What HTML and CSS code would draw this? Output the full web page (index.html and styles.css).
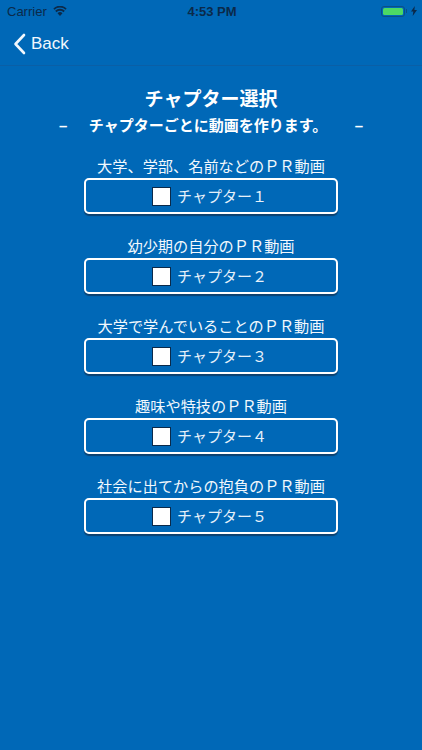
FILE: index.html
```html
<!DOCTYPE html>
<html lang="ja">
<head>
<meta charset="utf-8">
<title>チャプター選択</title>
<link rel="stylesheet" href="styles.css">
</head>
<body>
<div class="status">
  <div class="st-left"><span>Carrier</span>
    <svg class="wifi" width="14" height="10" viewBox="0 0 16 12"><path d="M8 12 5 8.7a4.2 4.2 0 0 1 6 0zM3.8 7.4 2.2 5.6a8.2 8.2 0 0 1 11.6 0l-1.6 1.8a5.9 5.9 0 0 0-8.4 0zM1.3 4.6 0 3a11.3 11.3 0 0 1 16 0l-1.3 1.6a9.4 9.4 0 0 0-13.4 0z" fill="#0b2a4a"/></svg>
  </div>
  <div class="st-time">4:53 PM</div>
  <div class="st-right">
    <span class="batt"><span class="batt-fill"></span></span><span class="batt-tip"></span>
    <svg class="bolt" width="6" height="10" viewBox="0 0 6 10"><path d="M3.8 0 0 5.6h2.3L1.7 10 6 3.9H3.4z" fill="#0b2a4a"/></svg>
  </div>
</div>
<nav class="nav">
  <svg class="chev" width="13" height="22" viewBox="0 0 13 22"><path d="M11 2 2.5 11l8.5 9" fill="none" stroke="#f2f8fd" stroke-width="2.6" stroke-linecap="round" stroke-linejoin="round"/></svg>
  <span class="back">Back</span>
</nav>
<main class="main">
  <h1 class="title">チャプター選択</h1>
  <div class="sub"><span>–</span><span class="sub-text">チャプターごとに動画を作ります。</span><span>–</span></div>
  <section class="group">
    <div class="label">大学、学部、名前などのＰＲ動画</div>
    <div class="btn"><span class="check"></span><span class="btn-text">チャプター１</span></div>
  </section>
  <section class="group">
    <div class="label">幼少期の自分のＰＲ動画</div>
    <div class="btn"><span class="check"></span><span class="btn-text">チャプター２</span></div>
  </section>
  <section class="group">
    <div class="label">大学で学んでいることのＰＲ動画</div>
    <div class="btn"><span class="check"></span><span class="btn-text">チャプター３</span></div>
  </section>
  <section class="group">
    <div class="label">趣味や特技のＰＲ動画</div>
    <div class="btn"><span class="check"></span><span class="btn-text">チャプター４</span></div>
  </section>
  <section class="group">
    <div class="label">社会に出てからの抱負のＰＲ動画</div>
    <div class="btn"><span class="check"></span><span class="btn-text">チャプター５</span></div>
  </section>
</main>
</body>
</html>
```
FILE: styles.css
```css
* { box-sizing: border-box; }
html, body { margin: 0; padding: 0; }
body {
  width: 422px;
  height: 750px;
  overflow: hidden;
  background: #0068b7;
  color: #fff;
  font-family: "Liberation Sans", "Noto Sans CJK JP", sans-serif;
}
.status {
  height: 22px;
  display: flex;
  align-items: center;
  padding: 0 5px 0 7px;
  font-size: 13px;
  color: #0b2a4a;
}
.st-left { flex: 1; display: flex; align-items: center; gap: 6px; }
.st-time { font-weight: 700; font-size: 13px; }
.st-right { flex: 1; display: flex; align-items: center; justify-content: flex-end; }
.batt {
  width: 24px; height: 11px;
  border: 1px solid #0b4f86;
  border-radius: 3px;
  padding: 1px;
  display: flex;
}
.batt-fill { flex: 1; background: #4cd964; border-radius: 1.5px; }
.batt-tip { width: 1px; height: 4px; background: #0b4f86; margin-left: 1px; }
.bolt { margin-left: 4px; }
.nav {
  height: 44px;
  display: flex;
  align-items: center;
  padding-left: 13px;
  gap: 5px;
  border-bottom: 1px solid #0a5fa6;
}
.back { font-size: 17px; color: #f2f8fd; }
.main {
  display: flex;
  flex-direction: column;
  align-items: center;
  padding-top: 22px;
}
.title {
  margin: 0;
  font-size: 19px;
  line-height: 24px;
  font-weight: 700;
}
.sub {
  width: 304px;
  margin-top: 4px;
  display: flex;
  justify-content: space-between;
  font-size: 15px;
  font-weight: 700;
  line-height: 20px;
}
.sub-text { margin-right: 6px; }
.group {
  width: 254px;
  display: flex;
  flex-direction: column;
  align-items: center;
  margin-bottom: 23px;
}
.sub + .group { margin-top: 21px; }
.label {
  font-size: 15.2px;
  line-height: 20px;
  white-space: nowrap;
  color: #f2f8fd;
}
.btn {
  width: 254px;
  height: 36px;
  margin-top: 1px;
  padding-right: 3px;
  display: flex;
  align-items: center;
  justify-content: center;
  gap: 6px;
  border: 2px solid #fff;
  border-radius: 5px;
  box-shadow: 0 2px 1px #0b4170;
  font-size: 15px;
  color: #e6f1fa;
}
.btn-text { margin-bottom: 2px; }
.check {
  width: 19px;
  height: 19px;
  background: #fff;
  border: 1px solid #0b2a4a;
}
```
